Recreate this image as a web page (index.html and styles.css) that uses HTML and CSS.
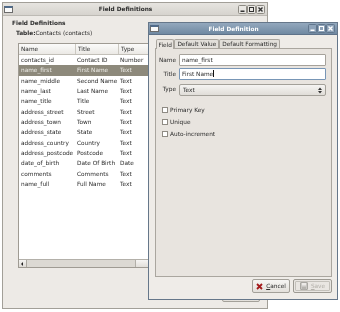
FILE: index.html
```html
<!DOCTYPE html>
<html lang="en">

<head>
    <meta charset="UTF-8">
    <title>Field Definitions</title>
    <link rel="stylesheet" href="styles.css">
</head>

<body>
    <div class="window main-win">
        <div class="titlebar">
            <span class="win-icon"></span>
            <span class="title">Field Definitions</span>
            <svg class="win-btns" width="27" height="9" viewBox="0 0 27 9">
                <rect x="0.5" y="0.5" width="8" height="8" rx="1" fill="#e9e7e3" stroke="#8d8a83"/>
                <rect x="9.5" y="0.5" width="8" height="8" rx="1" fill="#e9e7e3" stroke="#8d8a83"/>
                <rect x="18.5" y="0.5" width="8" height="8" rx="1" fill="#e9e7e3" stroke="#8d8a83"/>
                <rect x="2.5" y="5.5" width="4" height="1.5" fill="#333"/>
                <rect x="11.5" y="2.5" width="4" height="4" fill="none" stroke="#333"/>
                <path d="M20.5 2.5 L24.5 6.5 M24.5 2.5 L20.5 6.5" stroke="#333" stroke-width="1.4"/>
            </svg>
        </div>
        <div class="main-body">
            <div class="heading">Field Definitions</div>
            <div class="table-name"><b>Table:</b>Contacts (contacts)</div>
            <div class="list">
                <div class="list-row list-head"><span>Name</span><span>Title</span><span>Type</span></div>
                <div class="list-row"><span>contacts_id</span><span>Contact ID</span><span>Number</span></div>
                <div class="list-row selected"><span>name_first</span><span>First Name</span><span>Text</span></div>
                <div class="list-row"><span>name_middle</span><span>Second Name</span><span>Text</span></div>
                <div class="list-row"><span>name_last</span><span>Last Name</span><span>Text</span></div>
                <div class="list-row"><span>name_title</span><span>Title</span><span>Text</span></div>
                <div class="list-row"><span>address_street</span><span>Street</span><span>Text</span></div>
                <div class="list-row"><span>address_town</span><span>Town</span><span>Text</span></div>
                <div class="list-row"><span>address_state</span><span>State</span><span>Text</span></div>
                <div class="list-row"><span>address_country</span><span>Country</span><span>Text</span></div>
                <div class="list-row"><span>address_postcode</span><span>Postcode</span><span>Text</span></div>
                <div class="list-row"><span>date_of_birth</span><span>Date Of Birth</span><span>Date</span></div>
                <div class="list-row"><span>comments</span><span>Comments</span><span>Text</span></div>
                <div class="list-row"><span>name_full</span><span>Full Name</span><span>Text</span></div>
                <div class="list-fill"></div>
                <div class="hscroll">
                    <span class="scroll-arrow"></span>
                    <span class="scroll-trough"><span class="scroll-thumb"></span></span>
                </div>
            </div>
            <div class="main-actions"><span class="btn">Close</span></div>
        </div>
    </div>

    <div class="window dialog">
        <div class="titlebar active">
            <span class="win-icon"></span>
            <span class="title">Field Definition</span>
            <svg class="win-btns" width="27" height="9" viewBox="0 0 27 9">
                <rect x="0.5" y="0.5" width="8" height="8" rx="1" fill="#8ea3b9" stroke="#61768d"/>
                <rect x="9.5" y="0.5" width="8" height="8" rx="1" fill="#8ea3b9" stroke="#61768d"/>
                <rect x="18.5" y="0.5" width="8" height="8" rx="1" fill="#8ea3b9" stroke="#61768d"/>
                <rect x="2.5" y="5.5" width="4" height="1.5" fill="#fff"/>
                <rect x="11.5" y="2.5" width="4" height="4" fill="none" stroke="#fff"/>
                <path d="M20.5 2.5 L24.5 6.5 M24.5 2.5 L20.5 6.5" stroke="#fff" stroke-width="1.4"/>
            </svg>
        </div>
        <div class="dialog-body">
            <div class="tabs">
                <span class="tab current">Field</span>
                <span class="tab">Default Value</span>
                <span class="tab">Default Formatting</span>
            </div>
            <div class="page">
                <div class="form">
                    <span class="label">Name</span>
                    <span class="entry">name_first</span>
                    <span class="label">Title</span>
                    <span class="entry focus">First Name<i class="caret"></i></span>
                    <span class="label">Type</span>
                    <span class="combo">Text
                        <svg class="combo-arrows" width="4" height="7" viewBox="0 0 4 7">
                            <path d="M0 3 L2 0.5 L4 3 Z M0 4 L2 6.5 L4 4 Z" fill="#333"/>
                        </svg>
                    </span>
                </div>
                <div class="checks">
                    <label class="check"><span class="box"></span>Primary Key</label>
                    <label class="check"><span class="box"></span>Unique</label>
                    <label class="check"><span class="box"></span>Auto-increment</label>
                </div>
            </div>
            <div class="dialog-actions">
                <span class="btn cancel">
                    <svg width="7" height="7" viewBox="0 0 7 7">
                        <path d="M1 1 L6 6 M6 1 L1 6" stroke="#a4191b" stroke-width="1.8"/>
                    </svg>
                    <span><u>C</u>ancel</span>
                </span>
                <span class="btn save">
                    <span class="btn-inner">
                        <svg width="8" height="8" viewBox="0 0 8 8">
                            <rect x="0.5" y="0.5" width="7" height="7" rx="0.5" fill="#c9c7c3" stroke="#a9a7a2"/>
                            <rect x="2" y="1" width="4" height="2.5" fill="#eceae7"/>
                            <rect x="2" y="5" width="4" height="2.5" fill="#b6b4af"/>
                        </svg>
                        <span><u>S</u>ave</span>
                    </span>
                </span>
            </div>
        </div>
    </div>
</body>

</html>
```

FILE: styles.css
```css
* {
    margin: 0;
    padding: 0;
    box-sizing: border-box;
}

body {
    background-color: #ffffff;
    font-family: "DejaVu Sans", "Liberation Sans", sans-serif;
    font-size: 5.8px;
    color: #2b2b2b;
    -webkit-font-smoothing: antialiased;
}

/* windows on the desktop */
.window {
    position: absolute;
    display: flex;
    flex-direction: column;
    background-color: #edeae6;
    border: 1px solid #a29f98;
    will-change: transform;
}

.main-win {
    left: 2px;
    top: 2px;
    width: 266px;
    height: 307px;
}

.dialog {
    left: 148px;
    top: 22px;
    width: 190px;
    height: 278px;
    border-color: #66778a;
}

.titlebar {
    height: 13px;
    display: flex;
    align-items: center;
    padding: 0 2px 0 1px;
    background: linear-gradient(#e6e4e0, #d6d3ce);
    border-bottom: 1px solid #bdbab4;
    font-weight: bold;
    color: #2a2a2a;
}

.titlebar.active {
    height: 12px;
    background: linear-gradient(#93a8bd, #7089a2);
    border-bottom-color: #5e7289;
    color: #ffffff;
}

.win-icon {
    width: 9px;
    height: 7px;
    background-color: #fafafa;
    border: 1px solid #6b6b6b;
    border-top-width: 2px;
    border-top-color: #4f6a8a;
}

.title {
    flex: 1;
    text-align: center;
}

.win-btns {
    display: block;
}

/* main window */
.main-body {
    flex: 1;
    padding: 3px 7px 6px 9px;
    display: flex;
    flex-direction: column;
}

.heading {
    font-weight: bold;
    line-height: 8px;
}

.table-name {
    line-height: 8px;
    margin: 2px 0 0 4px;
}

.list {
    margin: 6px 0 0 6px;
    height: 225px;
    display: flex;
    flex-direction: column;
    background-color: #ffffff;
    border: 1px solid #9f9b93;
}

.list-row {
    display: grid;
    grid-template-columns: 56px 43px 1fr;
    height: 10.33px;
    line-height: 10.33px;
    white-space: nowrap;
}

.list-row span {
    padding-left: 2px;
    overflow: hidden;
}

.list-head {
    height: 11px;
    line-height: 11px;
    background: linear-gradient(#fbfbfa, #ebe9e5);
    border-bottom: 1px solid #c3c0b9;
}

.list-head span + span {
    border-left: 1px solid #cbc8c1;
}

.list-row.selected {
    background-color: #8d897b;
    color: #ecebe6;
}

.list-fill {
    flex: 1;
}

.hscroll {
    height: 8px;
    display: flex;
    background-color: #dcd9d3;
    border-top: 1px solid #b3b0a9;
}

.scroll-arrow {
    width: 8px;
    background: linear-gradient(#f4f3f1, #dedbd6);
    border-right: 1px solid #a9a69f;
    position: relative;
}

.scroll-arrow::after {
    content: "";
    position: absolute;
    left: 2px;
    top: 1.5px;
    border-right: 2.5px solid #222;
    border-top: 2px solid transparent;
    border-bottom: 2px solid transparent;
}

.scroll-trough {
    flex: 1;
    padding-left: 108px;
}

.scroll-thumb {
    display: block;
    height: 100%;
    background: linear-gradient(#f6f5f3, #e2dfda);
    border-left: 1px solid #b2afa8;
}

.main-actions {
    margin-top: 17px;
    display: flex;
    justify-content: flex-end;
}

.btn {
    height: 17px;
    width: 38px;
    display: flex;
    align-items: center;
    justify-content: center;
    gap: 3px;
    background: linear-gradient(#f6f5f3, #e3e0db);
    border: 1px solid #a3a099;
    border-radius: 2px;
}

/* dialog */
.dialog-body {
    flex: 1;
    display: flex;
    flex-direction: column;
    padding: 3px 5px 6px 6px;
    background-color: #efece8;
}

.tabs {
    display: flex;
    height: 10px;
    padding-left: 1px;
}

.tab {
    line-height: 9px;
    margin-top: 1px;
    padding: 0 2px;
    background-color: #e2dfda;
    border: 1px solid #aaa69f;
    border-bottom: none;
    border-radius: 2px 2px 0 0;
}

.tab.current {
    margin-top: 0;
    padding: 0 1.5px;
    line-height: 10px;
    background-color: #e8e4df;
    position: relative;
    top: 1px;
}

.page {
    height: 229px;
    background-color: #e8e4df;
    border: 1px solid #aaa69f;
    padding: 5px 5px 0 1px;
}

.form {
    display: grid;
    grid-template-columns: 19px 1fr;
    column-gap: 3px;
    row-gap: 2px;
    align-items: center;
}

.label {
    text-align: right;
}

.entry {
    height: 12px;
    line-height: 10px;
    padding-left: 2px;
    background-color: #ffffff;
    border: 1px solid #a6a29b;
    border-radius: 1px;
}

.entry.focus {
    border-color: #7896b6;
}

.caret {
    display: inline-block;
    width: 0.6px;
    height: 7px;
    background-color: #111;
    vertical-align: -1px;
}

.combo {
    height: 12px;
    margin-top: 2px;
    display: flex;
    align-items: center;
    justify-content: space-between;
    padding: 0 3px 0 3px;
    background: linear-gradient(#f5f4f2, #e0ddd8);
    border: 1px solid #a3a099;
    border-radius: 2px;
}

.checks {
    margin: 8px 0 0 5px;
    display: flex;
    flex-direction: column;
}

.check {
    display: flex;
    align-items: center;
    gap: 2px;
    height: 12px;
}

.box {
    width: 6px;
    height: 6px;
    background-color: #ffffff;
    border: 1px solid #8f8b84;
}

.dialog-actions {
    margin-top: 2px;
    display: flex;
    justify-content: flex-end;
    gap: 3px;
}

.dialog-actions .btn {
    height: 14px;
}

.btn.save {
    width: 39px;
    padding: 1px;
    border-color: #9c9992;
    background: #e9e6e2;
}

.btn-inner {
    width: 100%;
    height: 100%;
    display: flex;
    align-items: center;
    justify-content: center;
    gap: 3px;
    color: #b3b0aa;
    border: 1px solid #c4c1bb;
    border-radius: 1px;
}
```
